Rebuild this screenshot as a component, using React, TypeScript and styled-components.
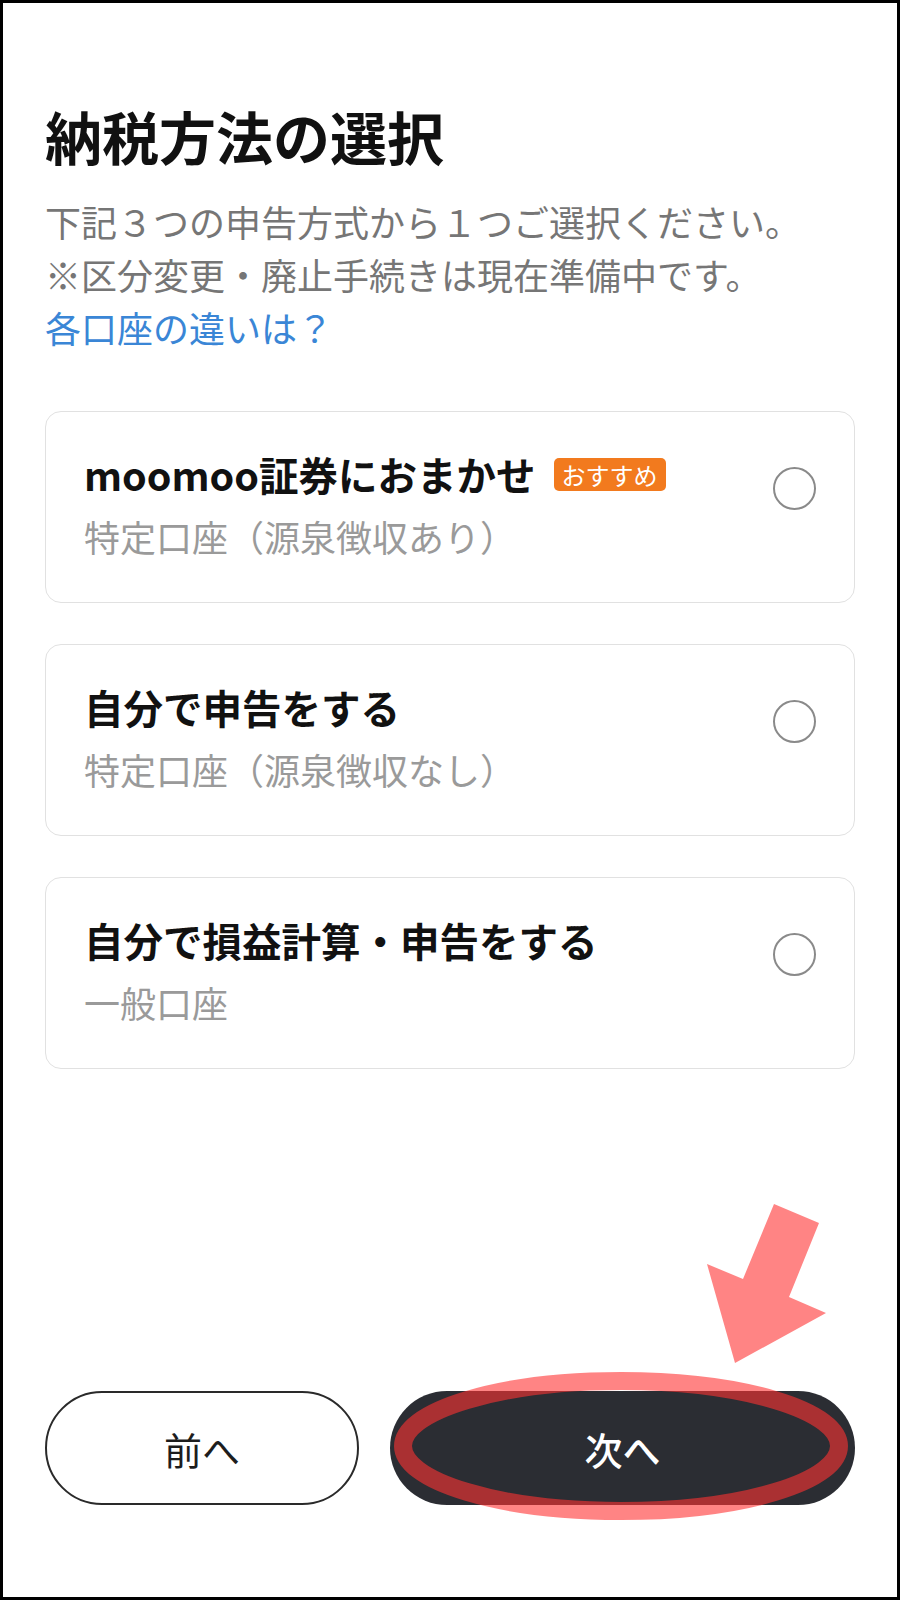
import React from 'react';
import styled, { createGlobalStyle } from 'styled-components';

const GlobalStyle = createGlobalStyle`
  html, body {
    margin: 0;
    padding: 0;
    background: #fff;
  }
  body {
    font-family: "Noto Sans CJK JP", "Noto Sans", sans-serif;
  }
`;

export const Frame = styled.div`
  position: relative;
  width: 900px;
  height: 1600px;
  box-sizing: border-box;
  border: 3px solid #000;
  background: #fff;
  padding: 97px 42px 92px;
  display: flex;
  flex-direction: column;
`;

export const Heading = styled.h1`
  margin: 0;
  font-size: 57px;
  line-height: 70px;
  font-weight: 700;
  color: #111;
`;

export const Intro = styled.div`
  margin-top: 25px;
  font-size: 36px;
  line-height: 53px;
  color: #767676;
`;

export const HelpLink = styled.a`
  display: block;
  color: #3a86d6;
  text-decoration: none;
  cursor: pointer;
`;

export const OptionList = styled.div`
  margin-top: 57px;
  display: flex;
  flex-direction: column;
  gap: 41px;
`;

export const OptionCard = styled.label`
  height: 192px;
  box-sizing: border-box;
  border: 1.5px solid #e1e1e1;
  border-radius: 16px;
  padding: 36px 38px 0 38px;
  display: flex;
  align-items: flex-start;
  justify-content: space-between;
  cursor: pointer;
`;

export const OptionText = styled.div`
  display: flex;
  flex-direction: column;
  gap: 10px;
`;

export const OptionTitle = styled.div`
  display: flex;
  align-items: center;
  font-size: 39.5px;
  line-height: 52px;
  font-weight: 700;
  color: #111;
`;

export const OptionSub = styled.div`
  font-size: 36px;
  line-height: 52px;
  color: #9a9a9a;
`;

export const Badge = styled.span`
  margin-left: 18px;
  height: 33px;
  padding: 0 8px;
  border-radius: 5px;
  background: #f27a1e;
  color: #fff;
  font-size: 24px;
  font-weight: 400;
  line-height: 33px;
`;

export const Radio = styled.span`
  margin-top: 19px;
  width: 43px;
  height: 43px;
  box-sizing: border-box;
  border: 2.5px solid #8a8a8a;
  border-radius: 50%;
  flex-shrink: 0;
`;

export const Spacer = styled.div`
  flex: 1;
`;

export const ButtonRow = styled.div`
  display: flex;
  gap: 31px;
`;

export const NavButton = styled.button<{ $primary?: boolean }>`
  flex: ${(p) => (p.$primary ? 3 : 2)} 1 0;
  min-width: 0;
  height: 114px;
  padding: 0;
  border-radius: 57px;
  box-sizing: border-box;
  border: ${(p) => (p.$primary ? 'none' : '2px solid #2a2a2a')};
  background: ${(p) => (p.$primary ? '#2b2d33' : '#fff')};
  color: ${(p) => (p.$primary ? '#fff' : '#1d1d1d')};
  font-family: "Noto Sans CJK JP", "Noto Sans", sans-serif;
  font-size: 38px;
  font-weight: ${(p) => (p.$primary ? 500 : 400)};
  cursor: pointer;
`;

export const Annotation = styled.svg`
  position: absolute;
  top: -3px;
  left: -3px;
  width: 900px;
  height: 1600px;
  pointer-events: none;
`;

const options = [
  { title: 'moomoo証券におまかせ', sub: '特定口座（源泉徴収あり）', badge: 'おすすめ' },
  { title: '自分で申告をする', sub: '特定口座（源泉徴収なし）' },
  { title: '自分で損益計算・申告をする', sub: '一般口座' },
];

export default function App() {
  return (
    <>
      <GlobalStyle />
      <Frame>
        <Heading>納税方法の選択</Heading>
        <Intro>
          <div>下記３つの申告方式から１つご選択ください。</div>
          <div>※区分変更・廃止手続きは現在準備中です。</div>
          <HelpLink>各口座の違いは？</HelpLink>
        </Intro>
        <OptionList>
          {options.map((o) => (
            <OptionCard key={o.title}>
              <OptionText>
                <OptionTitle>
                  {o.title}
                  {o.badge && <Badge>{o.badge}</Badge>}
                </OptionTitle>
                <OptionSub>{o.sub}</OptionSub>
              </OptionText>
              <Radio />
            </OptionCard>
          ))}
        </OptionList>
        <Spacer />
        <ButtonRow>
          <NavButton>前へ</NavButton>
          <NavButton $primary>次へ</NavButton>
        </ButtonRow>
        <Annotation viewBox="0 0 900 1600">
          <ellipse
            cx="621"
            cy="1446"
            rx="218"
            ry="65"
            fill="none"
            stroke="rgba(255, 50, 50, 0.6)"
            strokeWidth="18"
          />
          <polygon
            points="774,1204 819,1223 789,1297 826,1313 735,1363 707,1264 743,1279"
            fill="rgba(255, 50, 50, 0.6)"
          />
        </Annotation>
      </Frame>
    </>
  );
}
